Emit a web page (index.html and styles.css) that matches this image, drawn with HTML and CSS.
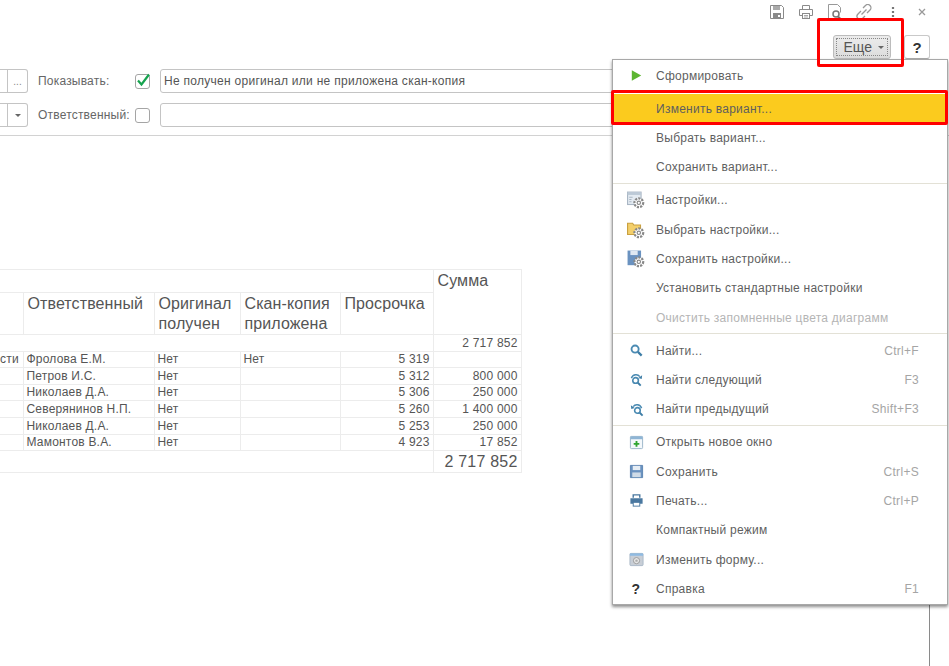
FILE: index.html
```html
<!DOCTYPE html>
<html lang="ru">
<head>
    <meta charset="UTF-8">
    <meta name="viewport" content="width=device-width, initial-scale=1.0">
    <title>Отчет</title>
    <link rel="stylesheet" href="styles.css">
</head>
<body>

    <!-- верхние значки окна -->
    <div class="window-tools">
        <svg class="tool" viewBox="0 0 16 16"><path d="M1.500 1.500h11l2 2v11h-13z" fill="none" stroke="#8a8a8a"/><rect x="4" y="2" width="7" height="4" fill="#aaa"/><rect x="4" y="9" width="8" height="5" fill="#8a8a8a"/><rect x="9" y="11" width="2" height="2" fill="#fff"/></svg>
        <svg class="tool" viewBox="0 0 16 16"><path d="M4.500 5V1.500h7V5M4.500 11.500h-3V5.500h13v6h-3" fill="none" stroke="#8a8a8a"/><rect x="4.500" y="9.500" width="7" height="5" fill="#fff" stroke="#8a8a8a"/><path d="M6 11.500h4M6 13h4" stroke="#aaa"/></svg>
        <svg class="tool" viewBox="0 0 16 16"><path d="M9 15.500H1.500V.5h9l3 3v5" fill="none" stroke="#999"/><circle cx="9" cy="10" r="3" fill="none" stroke="#777" stroke-width="1.500"/><path d="M11 12.500l3 3" stroke="#777" stroke-width="2"/></svg>
        <svg class="tool" viewBox="0 0 16 16"><path d="M7 4l2.500-2.500a2.800 2.800 0 0 1 4.500 4.500L11 9M9 12l-2.500 2.500a2.800 2.800 0 0 1-4.500-4.500L5 7M5.500 10.500l5-5" fill="none" stroke="#999" stroke-width="1.300"/></svg>
        <svg class="tool" viewBox="0 0 16 16"><path d="M8 3v2M8 7v2M8 11v2" stroke="#777" stroke-width="2.200"/></svg>
        <svg class="tool" viewBox="0 0 16 16"><path d="M5 5l6 6M11 5l-6 6" stroke="#999" stroke-width="1.300"/></svg>
    </div>

    <!-- кнопки формы -->
    <div class="form-actions">
        <button class="more-button"><span class="focus-box">Еще <span class="arrow"></span></span></button>
        <button class="help-button">?</button>
    </div>

    <!-- отбор -->
    <div class="filters">
        <div class="filter-row">
            <div class="stub-field"><span class="stub-btn">...</span></div>
            <span class="filter-label">Показывать:</span>
            <span class="check">
                <svg viewBox="0 0 14 14"><path d="M2 7.500l3.500 4L13 1.500" fill="none" stroke="#16a34f" stroke-width="2.200"/></svg>
            </span>
            <div class="text-field">Не получен оригинал или не приложена скан-копия</div>
        </div>
        <div class="filter-row">
            <div class="stub-field"><span class="stub-btn"><span class="arrow"></span></span></div>
            <span class="filter-label">Ответственный:</span>
            <span class="check"></span>
            <div class="text-field"></div>
        </div>
    </div>

    <!-- таблица отчета -->
    <table class="report">
        <colgroup>
            <col class="col-a"><col class="col-b"><col class="col-c"><col class="col-d"><col class="col-e"><col class="col-f">
        </colgroup>
        <tr class="head-top">
            <td colspan="5" class="open-left"></td>
            <td rowspan="2" class="head">Сумма</td>
        </tr>
        <tr class="head-main">
            <td class="open-left"></td>
            <td class="head">Ответственный</td>
            <td class="head">Оригинал получен</td>
            <td class="head">Скан-копия приложена</td>
            <td class="head">Просрочка</td>
        </tr>
        <tr class="row-sub">
            <td colspan="5" class="open-left"></td>
            <td class="num">2 717 852</td>
        </tr>
        <tr>
            <td class="open-left cut">сти</td>
            <td>Фролова Е.М.</td><td>Нет</td><td>Нет</td><td class="num">5 319</td><td class="num"></td>
        </tr>
        <tr>
            <td class="open-left"></td>
            <td>Петров И.С.</td><td>Нет</td><td></td><td class="num">5 312</td><td class="num">800 000</td>
        </tr>
        <tr>
            <td class="open-left"></td>
            <td>Николаев Д.А.</td><td>Нет</td><td></td><td class="num">5 306</td><td class="num">250 000</td>
        </tr>
        <tr>
            <td class="open-left"></td>
            <td>Северянинов Н.П.</td><td>Нет</td><td></td><td class="num">5 260</td><td class="num">1 400 000</td>
        </tr>
        <tr>
            <td class="open-left"></td>
            <td>Николаев Д.А.</td><td>Нет</td><td></td><td class="num">5 253</td><td class="num">250 000</td>
        </tr>
        <tr>
            <td class="open-left"></td>
            <td>Мамонтов В.А.</td><td>Нет</td><td></td><td class="num">4 923</td><td class="num">17 852</td>
        </tr>
        <tr class="row-total">
            <td colspan="5" class="open-left"></td>
            <td class="num">2 717 852</td>
        </tr>
    </table>

    <div class="scroll-line"></div>

    <!-- выпадающее меню -->
    <div class="menu">
        <div class="menu-item">
            <span class="menu-icon"><svg viewBox="0 0 16 16"><path d="M3 2.500l10 5.500-10 5.500z" fill="#5cb531"/></svg></span>
            <span class="menu-text">Сформировать</span>
        </div>
        <div class="menu-sep hidden-sep"></div>
        <div class="menu-item active">
            <span class="menu-icon"></span>
            <span class="menu-text">Изменить вариант...</span>
        </div>
        <div class="menu-item">
            <span class="menu-icon"></span>
            <span class="menu-text">Выбрать вариант...</span>
        </div>
        <div class="menu-item">
            <span class="menu-icon"></span>
            <span class="menu-text">Сохранить вариант...</span>
        </div>
        <div class="menu-sep"></div>
        <div class="menu-item">
            <span class="menu-icon"><svg class="gear-icon" viewBox="0 0 16 16"><rect x=".5" y="1" width="12" height="11" fill="#e4ebf2" stroke="#a9b6c4"/><rect x=".5" y="1" width="12" height="2.500" fill="#bcc9d6"/><path d="M2 5.500h3M2 7.500h2M2 9.500h2" stroke="#a9b6c4"/><circle cx="10.500" cy="10.500" r="3.900" fill="#fff" stroke="#888" stroke-width="2" stroke-dasharray="1.900 1"/><circle cx="10.500" cy="10.500" r="1.500" fill="none" stroke="#888"/></svg></span>
            <span class="menu-text">Настройки...</span>
        </div>
        <div class="menu-item">
            <span class="menu-icon"><svg class="gear-icon" viewBox="0 0 16 16"><path d="M.5 2h4.500l1 1.500h6V12H.5z" fill="#f3cf6b" stroke="#c9a040"/><circle cx="10.500" cy="10.500" r="3.900" fill="#fff" stroke="#888" stroke-width="2" stroke-dasharray="1.900 1"/><circle cx="10.500" cy="10.500" r="1.500" fill="none" stroke="#888"/></svg></span>
            <span class="menu-text">Выбрать настройки...</span>
        </div>
        <div class="menu-item">
            <span class="menu-icon"><svg class="gear-icon" viewBox="0 0 16 16"><rect x=".5" y=".5" width="12" height="13" fill="#6a92c0"/><rect x="3" y=".5" width="6.500" height="4" fill="#dfe8f2"/><circle cx="10.500" cy="10.500" r="3.900" fill="#fff" stroke="#888" stroke-width="2" stroke-dasharray="1.900 1"/><circle cx="10.500" cy="10.500" r="1.500" fill="none" stroke="#888"/></svg></span>
            <span class="menu-text">Сохранить настройки...</span>
        </div>
        <div class="menu-item">
            <span class="menu-icon"></span>
            <span class="menu-text">Установить стандартные настройки</span>
        </div>
        <div class="menu-item disabled">
            <span class="menu-icon"></span>
            <span class="menu-text">Очистить запомненные цвета диаграмм</span>
        </div>
        <div class="menu-sep"></div>
        <div class="menu-item">
            <span class="menu-icon"><svg viewBox="0 0 16 16"><circle cx="6.500" cy="6.500" r="3.800" fill="none" stroke="#4a8ab2" stroke-width="2"/><path d="M9.500 9.500l4 4" stroke="#3d7da6" stroke-width="2.400"/></svg></span>
            <span class="menu-text">Найти...</span>
            <span class="menu-key">Ctrl+F</span>
        </div>
        <div class="menu-item">
            <span class="menu-icon"><svg viewBox="0 0 16 16"><circle cx="7" cy="9" r="3" fill="none" stroke="#4a8ab2" stroke-width="1.700"/><path d="M9.500 11.500l3 3" stroke="#3d7da6" stroke-width="2"/><path d="M2.500 6.500C4.500 2 9.500 2 11.500 5" fill="none" stroke="#4a8ab2" stroke-width="1.500"/><path d="M14 3.500l-.5 4-3.500-1z" fill="#3d7da6"/></svg></span>
            <span class="menu-text">Найти следующий</span>
            <span class="menu-key">F3</span>
        </div>
        <div class="menu-item">
            <span class="menu-icon"><svg viewBox="0 0 16 16"><circle cx="9" cy="9" r="3" fill="none" stroke="#4a8ab2" stroke-width="1.700"/><path d="M11.500 11.500l3 3" stroke="#3d7da6" stroke-width="2"/><path d="M13.500 6.500C11.500 2 6.500 2 4.500 5" fill="none" stroke="#4a8ab2" stroke-width="1.500"/><path d="M2 3.500l.5 4 3.500-1z" fill="#3d7da6"/></svg></span>
            <span class="menu-text">Найти предыдущий</span>
            <span class="menu-key">Shift+F3</span>
        </div>
        <div class="menu-sep"></div>
        <div class="menu-item">
            <span class="menu-icon"><svg viewBox="0 0 16 16"><rect x="1.500" y="1.500" width="13" height="13" rx="1" fill="#f4f8fb" stroke="#9ab3c8"/><rect x="1.500" y="1.500" width="13" height="3" fill="#8fb5d5"/><path d="M8 6.500v6M5 9.500h6" stroke="#2fa52f" stroke-width="2"/></svg></span>
            <span class="menu-text">Открыть новое окно</span>
        </div>
        <div class="menu-item">
            <span class="menu-icon"><svg viewBox="0 0 16 16"><path d="M1.500 1.500h13v13h-13z" fill="#6a92c0" stroke="#5c84b0"/><rect x="4" y="2" width="8" height="4.500" fill="#e6edf4"/><rect x="3.500" y="9" width="9" height="5" fill="#cfdbe7"/></svg></span>
            <span class="menu-text">Сохранить</span>
            <span class="menu-key">Ctrl+S</span>
        </div>
        <div class="menu-item">
            <span class="menu-icon"><svg viewBox="0 0 16 16"><path d="M4.500 5V2h7v3" fill="none" stroke="#4a78a0" stroke-width="1.500"/><path d="M1.500 5.500h13v6h-3v-2h-7v2h-3z" fill="#4a78a0"/><rect x="4.500" y="10" width="7" height="4" fill="#fff" stroke="#4a78a0"/></svg></span>
            <span class="menu-text">Печать...</span>
            <span class="menu-key">Ctrl+P</span>
        </div>
        <div class="menu-item">
            <span class="menu-icon"></span>
            <span class="menu-text">Компактный режим</span>
        </div>
        <div class="menu-item">
            <span class="menu-icon"><svg viewBox="0 0 16 16"><rect x="1" y="1.500" width="14" height="13" rx="1" fill="#c8ced6" stroke="#a9b8c6"/><rect x="1" y="1.500" width="14" height="2.500" fill="#8fbbe2"/><circle cx="8" cy="9.200" r="3.300" fill="#e8e8e8" stroke="#999"/><circle cx="8" cy="9.200" r="1.300" fill="#aaa"/></svg></span>
            <span class="menu-text">Изменить форму...</span>
        </div>
        <div class="menu-item">
            <span class="menu-icon help-icon">?</span>
            <span class="menu-text">Справка</span>
            <span class="menu-key">F1</span>
        </div>
    </div>

    <!-- красные рамки поверх скриншота -->
    <div class="red-frame frame-button"></div>
    <div class="red-frame frame-item"></div>

</body>
</html>
```

FILE: styles.css
```css
/* сброс */
* {
    margin: 0;
    padding: 0;
    box-sizing: border-box;
    font-family: 'Liberation Sans', Arial, sans-serif;
}

body {
    position: relative;
    width: 949px;
    height: 666px;
    overflow: hidden;
    background: #fff;
    color: #4b4b4b;
    font-size: 12px;
}

/* значки окна */
.window-tools {
    display: flex;
    justify-content: flex-end;
    align-items: center;
    gap: 13px;
    height: 24px;
    padding-right: 19px;
}

.tool {
    width: 16px;
    height: 16px;
}

/* кнопки формы */
.form-actions {
    display: flex;
    justify-content: flex-end;
    gap: 13px;
    height: 24px;
    margin-top: 11px;
    padding-right: 19px;
}

.more-button {
    width: 58px;
    height: 24px;
    padding: 2px;
    background: linear-gradient(#ececec, #dcdcdc);
    border: 1px solid #bcbcbc;
    border-radius: 3px;
    color: #555;
    font-size: 14px;
}

.focus-box {
    display: flex;
    justify-content: flex-end;
    align-items: center;
    gap: 6px;
    height: 100%;
    padding-right: 3px;
    border: 1px dotted #888;
}

.arrow {
    display: inline-block;
    border-top: 3px solid #666;
    border-left: 3px solid transparent;
    border-right: 3px solid transparent;
}

.help-button {
    width: 26px;
    height: 24px;
    background: #fff;
    border: 1px solid #c9c9c9;
    border-bottom-color: #aaa;
    border-radius: 3px;
    color: #333;
    font-size: 15px;
    font-weight: bold;
}

/* отбор */
.filters {
    display: flex;
    flex-direction: column;
    gap: 10px;
    height: 67px;
    margin-top: 10px;
    border-bottom: 1px solid #d2d2d2;
}

.filter-row {
    display: flex;
    align-items: center;
    height: 24px;
}

.stub-field {
    display: flex;
    justify-content: flex-end;
    width: 28px;
    height: 24px;
    border: 1px solid #c4c4c4;
    border-left: none;
    border-radius: 0 3px 3px 0;
}

.stub-btn {
    display: flex;
    justify-content: center;
    align-items: center;
    width: 20px;
    border-left: 1px solid #c4c4c4;
    color: #888;
    font-size: 10px;
}

.filter-label {
    width: 97px;
    margin-left: 10px;
    color: #666;
    font-size: 12px;
    letter-spacing: .2px;
}

.check {
    display: flex;
    justify-content: center;
    align-items: center;
    width: 15px;
    height: 15px;
    border: 1px solid #a5a5a5;
    border-radius: 3px;
}

.check svg {
    width: 14px;
    height: 14px;
    margin-top: -3px;
    margin-left: 1px;
    flex-shrink: 0;
}

.text-field {
    width: 600px;
    height: 24px;
    margin-left: 10px;
    padding: 4px 3px;
    border: 1px solid #c4c4c4;
    border-radius: 3px;
    color: #555;
    font-size: 12px;
    letter-spacing: .28px;
}

/* таблица отчета */
.report {
    width: 521px;
    margin-top: 133px;
    border-collapse: collapse;
    table-layout: fixed;
    color: #555;
    letter-spacing: .2px;
}

.col-a { width: 23px; }
.col-b { width: 131px; }
.col-c { width: 86px; }
.col-d { width: 100px; }
.col-e { width: 93px; }
.col-f { width: 88px; }

.report td {
    height: 16.6px;
    padding: 0 3px;
    border: 1px solid #ececec;
    vertical-align: bottom;
    line-height: 15px;
    overflow: hidden;
    white-space: nowrap;
}

.report td.open-left {
    border-left: none;
}

.report td.cut {
    padding: 0;
}

.report td.head {
    padding: 1px 2px 0 4px;
    font-size: 16px;
    line-height: 20px;
    letter-spacing: .1px;
    white-space: normal;
    vertical-align: top;
}

.report td.num {
    text-align: right;
}

.report .head-top td { height: 23px; }
.report .head-main td { height: 41px; }

.report .row-total td {
    height: 22px;
}

.report .row-total td.num {
    font-size: 16px;
    line-height: 20px;
    letter-spacing: .2px;
    vertical-align: middle;
}

.scroll-line {
    position: absolute;
    left: 929px;
    top: 600px;
    bottom: 0;
    width: 1px;
    background: #8a8a8a;
}

/* меню */
.menu {
    position: absolute;
    left: 612px;
    top: 59px;
    width: 336px;
    padding-top: 1px;
    border: 1px solid #a8a8a8;
    background: #fff;
    box-shadow: 0 2px 3px rgba(0, 0, 0, 0.45);
}

.menu-item {
    display: flex;
    align-items: center;
    height: 29.35px;
    padding: 0 28px 0 14px;
    color: #5f5f5f;
    font-size: 12px;
    letter-spacing: .25px;
}

.menu-item.active {
    background: #fbcb1e;
}

.menu-item.disabled .menu-text {
    color: #b5b5b5;
}

.menu-icon {
    display: flex;
    justify-content: center;
    align-items: center;
    width: 18px;
    height: 18px;
    margin-right: 11px;
}

.menu-icon svg {
    width: 15px;
    height: 15px;
}

.menu-icon svg.gear-icon {
    width: 18px;
    height: 18px;
}

.help-icon {
    color: #333;
    font-size: 14px;
    font-weight: bold;
}

.menu-text {
    flex: 1;
}

.menu-key {
    color: #a5a5a5;
    letter-spacing: .3px;
}

.menu-sep {
    height: 1px;
    margin: .8px 0 1.8px;
    background: #e3e1d6;
}

.hidden-sep {
    background: #fff;
}

/* красные рамки */
.red-frame {
    position: absolute;
    border: 3px solid #f00;
    border-radius: 2px;
}

.frame-button {
    left: 817px;
    top: 18px;
    width: 87px;
    height: 49px;
}

.frame-item {
    left: 611px;
    top: 90px;
    width: 337px;
    height: 35px;
}
```
